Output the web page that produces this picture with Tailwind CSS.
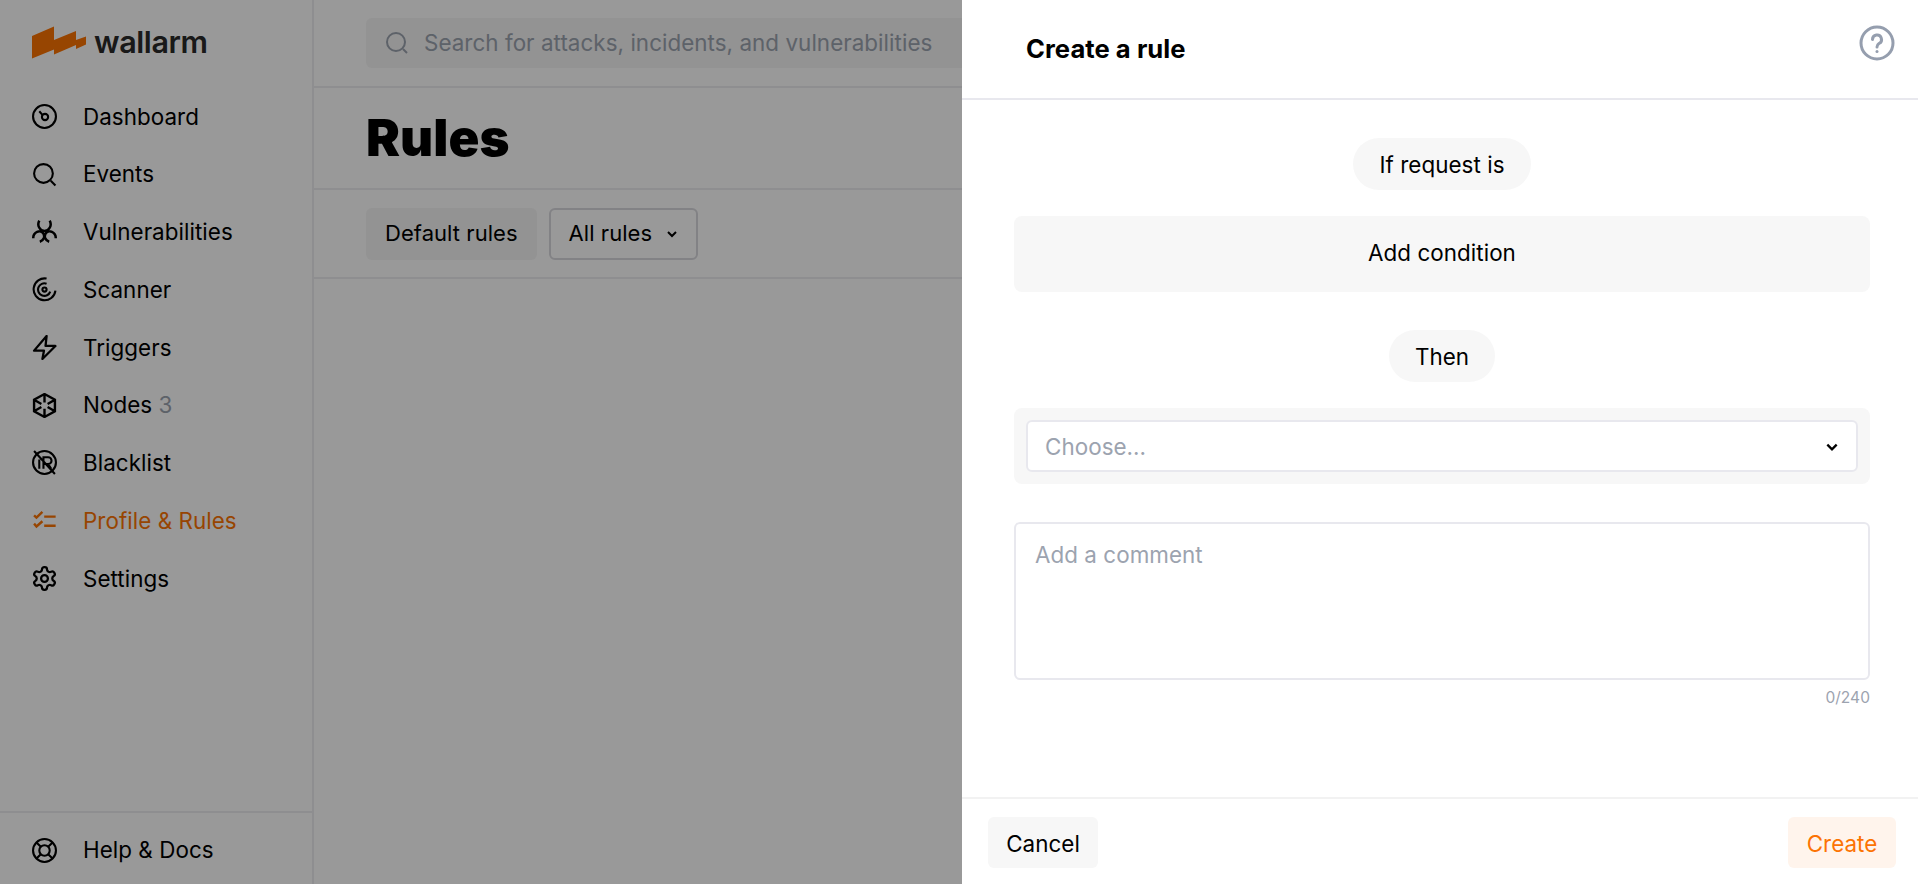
<!DOCTYPE html>
<html lang="en">
<head>
    <meta charset="UTF-8">
    <title>Rules</title>
    <script src="https://cdn.jsdelivr.net/npm/@tailwindcss/browser@4"></script>
</head>
<body class="h-[884px] overflow-hidden bg-white font-['Inter',sans-serif] text-black tracking-[0.05px]">
    <div class="flex h-[884px]">
        <!-- sidebar -->
        <aside class="w-[314px] shrink-0 flex flex-col border-r-2 border-[#ededf0]">
            <div class="h-[87.5px] pl-8 flex items-center gap-2">
                <svg width="54" height="33" viewBox="0 0 54 33" class="mb-[3px]"><path d="M0 10 22 .5V14L44 5V14L54 10.500V18.500L44 23V19L22 28.500V23.500L0 32.500Z" fill="#fc7303"/></svg>
                <span class="text-[30.5px] font-semibold tracking-[-0.4px] text-[#2a2a2a] mb-[3px]">wallarm</span>
            </div>
            <nav class="text-[22.4px] flex flex-col">
                <a class="h-[57.75px] flex items-center pl-8 gap-[26px]">
                    <svg class="w-[25px] h-[25px] shrink-0" viewBox="0 0 24 24" fill="none" stroke="currentColor" stroke-width="2"><circle cx="12" cy="12" r="11"/><circle cx="12.500" cy="12.500" r="3"/><path d="M10 10.500 7 7"/></svg>
                    Dashboard</a>
                <a class="h-[57.75px] flex items-center pl-8 gap-[26px]">
                    <svg class="w-[25px] h-[25px] shrink-0" viewBox="0 0 24 24" fill="none" stroke="currentColor" stroke-width="2"><circle cx="11" cy="11" r="9"/><path d="m18 18 4.500 4.500"/></svg>
                    Events</a>
                <a class="h-[57.75px] flex items-center pl-8 gap-[26px]">
                    <svg class="w-[25px] h-[25px] shrink-0" viewBox="0 0 24 24" fill="none" stroke="currentColor" stroke-width="2.400"><path d="M7 1.500C4.500 6 7.500 11.500 12 11.500S19.500 6 17 1.500M1.200 18.500C1 12.500 8 9.500 11 14 12.500 17 11.500 20.500 7.500 21.800M22.800 18.500C23 12.500 16 9.500 13 14 11.500 17 12.500 20.500 16.500 21.800"/></svg>
                    Vulnerabilities</a>
                <a class="h-[57.75px] flex items-center pl-8 gap-[26px]">
                    <svg class="w-[25px] h-[25px] shrink-0" viewBox="0 0 24 24" fill="none" stroke="currentColor" stroke-width="2"><path d="M14 1.500A10.500 10.500 0 1 0 22.500 13M14 6.500a6 6 0 1 0 3.500 7.500"/><circle cx="12" cy="12" r="2"/></svg>
                    Scanner</a>
                <a class="h-[57.75px] flex items-center pl-8 gap-[26px]">
                    <svg class="w-[25px] h-[25px] shrink-0" viewBox="0 0 24 24" fill="none" stroke="currentColor" stroke-width="2.200" stroke-linejoin="round"><path d="M14 1 2 15h9.500L10 23l12.500-12.500H13z"/></svg>
                    Triggers</a>
                <a class="h-[57.75px] flex items-center pl-8 gap-[26px]">
                    <svg class="w-[25px] h-[25px] shrink-0" viewBox="0 0 24 24" fill="none" stroke="currentColor" stroke-width="2.300"><path d="m12 1 10 5.500v11L12 23 2 17.500v-11zM12 1v8M12 15v8M2 6.500 9 10.500M15 13.500l7 4M22 6.500l-7 4M9 13.500l-7 4"/></svg>
                    <span>Nodes <span class="text-[#9ca3af]">3</span></span></a>
                <a class="h-[57.75px] flex items-center pl-8 gap-[26px]">
                    <svg class="w-[25px] h-[25px] shrink-0" viewBox="0 0 24 24" fill="none" stroke="currentColor" stroke-width="2"><circle cx="12" cy="12" r="11"/><path d="m2 1 20 22M7 18V9M11 18V7h4.500a3 3 0 0 1 0 6.500H11m4.500 0 3 4.500"/></svg>
                    Blacklist</a>
                <a class="h-[57.75px] flex items-center pl-8 gap-[26px] text-[#fc7303]">
                    <svg class="w-[25px] h-[25px] shrink-0" viewBox="0 0 24 24" fill="none" stroke="currentColor" stroke-width="2.300"><path d="m2 7 2.300 2.300L10 3.700M2 15l2.300 2.700L10 12.700M11.700 8.300h11M11.700 17h11"/></svg>
                    Profile &amp; Rules</a>
                <a class="h-[57.75px] flex items-center pl-8 gap-[26px]">
                    <svg class="w-[25px] h-[25px] shrink-0" viewBox="1 1 22 22" fill="none" stroke="currentColor" stroke-width="2"><circle cx="12" cy="12" r="3"/><path d="M12.220 2h-.44a2 2 0 0 0-2 2v.18a2 2 0 0 1-1 1.730l-.43.25a2 2 0 0 1-2 0l-.15-.08a2 2 0 0 0-2.730.73l-.22.38a2 2 0 0 0 .73 2.730l.15.1a2 2 0 0 1 1 1.720v.51a2 2 0 0 1-1 1.740l-.15.09a2 2 0 0 0-.73 2.730l.22.38a2 2 0 0 0 2.730.73l.15-.08a2 2 0 0 1 2 0l.43.25a2 2 0 0 1 1 1.730V20a2 2 0 0 0 2 2h.44a2 2 0 0 0 2-2v-.18a2 2 0 0 1 1-1.730l.43-.25a2 2 0 0 1 2 0l.15.08a2 2 0 0 0 2.730-.73l.22-.39a2 2 0 0 0-.73-2.730l-.15-.08a2 2 0 0 1-1-1.740v-.5a2 2 0 0 1 1-1.740l.15-.09a2 2 0 0 0 .73-2.730l-.22-.38a2 2 0 0 0-2.730-.73l-.15.08a2 2 0 0 1-2 0l-.43-.25a2 2 0 0 1-1-1.730V4a2 2 0 0 0-2-2z"/></svg>
                    Settings</a>
            </nav>
            <div class="mt-auto h-[73px] border-t-2 border-[#ededf0] pt-[3px] flex items-center pl-8 gap-[26px] text-[22.4px]">
                <svg class="w-[25px] h-[25px] shrink-0" viewBox="0 0 24 24" fill="none" stroke="currentColor" stroke-width="2"><circle cx="12" cy="12" r="11"/><circle cx="12" cy="12" r="5"/><path d="m4 4 4.500 4.500M20 4l-4.500 4.500M4 20l4.500-4.500M20 20l-4.500-4.500"/></svg>
                Help &amp; Docs
            </div>
        </aside>

        <!-- page -->
        <main class="flex-1 min-w-0">
            <div class="h-[88px] border-b-2 border-[#ededf0] pl-[52px] pt-[18px]">
                <div class="h-[50px] w-[800px] bg-[#f5f5f5] rounded-md flex items-center pl-[19px] gap-[15px] text-[22.4px] text-[#9ca3af]">
                    <svg class="w-6 h-6 shrink-0" viewBox="0 0 24 24" fill="none" stroke="currentColor" stroke-width="2"><circle cx="11" cy="11" r="9"/><path d="m18 18 4 4"/></svg>
                    Search for attacks, incidents, and vulnerabilities
                </div>
            </div>
            <div class="h-[102px] border-b-2 border-[#ededf0] pl-[52px] flex items-center">
                <h1 class="text-[51px] font-black">Rules</h1>
            </div>
            <div class="h-[89px] border-b-2 border-[#ededf0] pl-[52px] flex items-center gap-3">
                <button class="h-[52px] px-[19px] bg-[#f5f5f5] rounded-md text-[22px]">Default rules</button>
                <button class="h-[52px] px-[18px] border-2 border-[#d9d9de] rounded-md text-[22px] flex items-center gap-[14px]">
                    All rules
                    <svg class="w-3 h-3" viewBox="0 0 12 12" fill="none" stroke="currentColor" stroke-width="2"><path d="m2 4 4 4 4-4"/></svg>
                </button>
            </div>
        </main>
    </div>

    <!-- dim layer -->
    <div class="fixed inset-0 bg-black/40"></div>

    <!-- drawer -->
    <section class="fixed top-0 bottom-0 right-0 w-[956px] bg-white flex flex-col">
        <header class="h-[100px] shrink-0 border-b-2 border-[#e8e8ee] pl-[64px] pr-[23px] pt-[1px] flex items-center justify-between">
            <h2 class="text-[25.6px] font-bold">Create a rule</h2>
            <svg class="w-9 h-9 mb-[14px]" viewBox="0 0 36 36" fill="none" stroke="#959eae" stroke-width="3"><circle cx="18" cy="18" r="16"/><path d="M13.500 14.500a4.500 4.500 0 1 1 6.500 4c-1.500 1-2 1.500-2 3.500" stroke-linecap="round"/><circle cx="18" cy="26.500" r="1.500" fill="#959eae" stroke="none"/></svg>
        </header>
        <div class="flex-1 pl-[52px] pr-[48px] pt-[38px] flex flex-col items-center">
            <div class="h-[52px] rounded-full bg-[#f7f7f7] px-[26px] pt-[1px] flex items-center text-[22.4px]">If request is</div>
            <div class="mt-[26px] h-[76px] w-full rounded-lg bg-[#f7f7f7] pb-[2px] flex items-center justify-center text-[22.4px]">Add condition</div>
            <div class="mt-[38px] h-[52px] rounded-full bg-[#f7f7f7] px-[26px] pt-[1px] flex items-center text-[22.4px]">Then</div>
            <div class="mt-[26px] h-[76px] w-full rounded-lg bg-[#f7f7f7] p-3">
                <div class="h-[52px] bg-white border-2 border-[#e8e8ee] rounded-md pl-[17px] pr-[17px] pt-[1px] flex items-center justify-between text-[22.4px] text-[#9ca3af]">
                    Choose...
                    <svg class="w-[14px] h-[14px] text-black" viewBox="0 0 12 12" fill="none" stroke="currentColor" stroke-width="2"><path d="m2 4 4 4 4-4"/></svg>
                </div>
            </div>
            <div class="mt-[38px] h-[158px] w-full border-2 border-[#e8e8ee] rounded-md pl-[19px] pt-[14px] text-[22.4px] text-[#9ca3af]">Add a comment</div>
            <div class="w-full text-right text-[15.5px] text-[#9ca3af] mt-[6px]">0/240</div>
        </div>
        <footer class="h-[87px] shrink-0 border-t-2 border-[#f2f2f2] pl-[26px] pr-[22px] pt-[2px] flex items-center justify-between text-[22.4px]">
            <button class="h-[51px] w-[110px] pt-[2px] rounded-md bg-[#f7f7f7]">Cancel</button>
            <button class="h-[51px] w-[108px] pt-[2px] rounded-md bg-[#fff4ec] text-[#fc7303]">Create</button>
        </footer>
    </section>
</body>
</html>
